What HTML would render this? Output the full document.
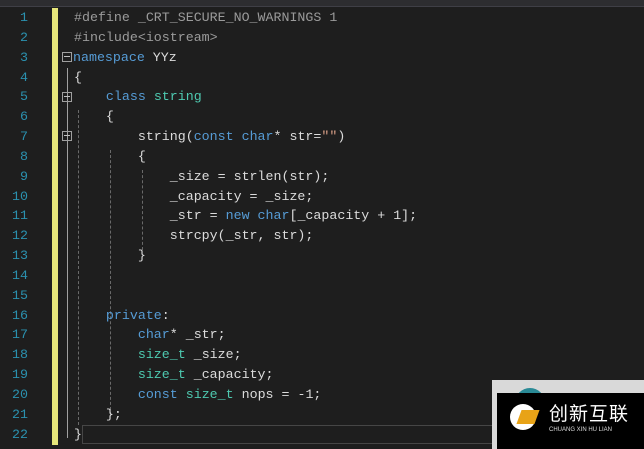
<!DOCTYPE html>
<html><head><meta charset="utf-8"><style>
body{margin:0;width:644px;height:449px;background:#1e1e1e;overflow:hidden;position:relative;font-family:"Liberation Mono","Noto Sans CJK SC",monospace;font-size:13.3px;}
.top{position:absolute;left:0;top:0;width:644px;height:6px;background:#2d2d30;border-bottom:1px solid #3f3f46}
.ln{position:absolute;left:0;width:28px;text-align:right;color:#2b91af;height:20px;line-height:20px}
.c{position:absolute;left:74px;height:20px;line-height:20px;color:#dcdcdc;white-space:pre}
.bar{position:absolute;left:52px;top:8px;width:6px;height:437px;background:#e6e67a}
.k{color:#569cd6}.t{color:#4ec9b0}.p{color:#9b9b9b}.s{color:#d69d85}
.box{position:absolute;width:8px;height:8px;border:1px solid #a0a0a0;left:62px}
.box:after{content:"";position:absolute;left:1px;top:3px;width:6px;height:1px;background:#c0c0c0}
.vl{position:absolute;width:1px;background:#a0a0a0}
.dl{position:absolute;width:0;border-left:1px dashed #6a6a6a}
.cur{position:absolute;left:82px;top:425px;width:570px;height:17px;border:1px solid #464646}
</style></head><body>
<div class="top"></div>
<div class="bar"></div>
<div class="cur"></div>
<div class="vl" style="left:67px;top:68px;height:370px"></div>
<div class="dl" style="left:78px;top:110px;height:315px"></div>
<div class="dl" style="left:110px;top:150px;height:265px"></div>
<div class="dl" style="left:142px;top:170px;height:80px"></div>
<div class="box" style="top:52px"></div>
<div class="box" style="top:92px"></div>
<div class="box" style="top:131px"></div>

<div class="ln" style="top:8px">1</div><div class="c" style="top:8px"><span class="p">#define _CRT_SECURE_NO_WARNINGS 1</span></div>
<div class="ln" style="top:28px">2</div><div class="c" style="top:28px"><span class="p">#include&lt;iostream&gt;</span></div>
<div class="ln" style="top:48px">3</div><div class="c" style="top:48px;left:73px"><span class="k">namespace</span> YYz</div>
<div class="ln" style="top:68px">4</div><div class="c" style="top:68px">{</div>
<div class="ln" style="top:87px">5</div><div class="c" style="top:87px">    <span class="k">class</span> <span class="t">string</span></div>
<div class="ln" style="top:107px">6</div><div class="c" style="top:107px">    {</div>
<div class="ln" style="top:127px">7</div><div class="c" style="top:127px">        string(<span class="k">const</span> <span class="k">char</span>* str=<span class="s">""</span>)</div>
<div class="ln" style="top:147px">8</div><div class="c" style="top:147px">        {</div>
<div class="ln" style="top:167px">9</div><div class="c" style="top:167px">            _size = strlen(str);</div>
<div class="ln" style="top:187px">10</div><div class="c" style="top:187px">            _capacity = _size;</div>
<div class="ln" style="top:206px">11</div><div class="c" style="top:206px">            _str = <span class="k">new</span> <span class="k">char</span>[_capacity + 1];</div>
<div class="ln" style="top:226px">12</div><div class="c" style="top:226px">            strcpy(_str, str);</div>
<div class="ln" style="top:246px">13</div><div class="c" style="top:246px">        }</div>
<div class="ln" style="top:266px">14</div>
<div class="ln" style="top:286px">15</div>
<div class="ln" style="top:306px">16</div><div class="c" style="top:306px">    <span class="k">private</span>:</div>
<div class="ln" style="top:325px">17</div><div class="c" style="top:325px">        <span class="k">char</span>* _str;</div>
<div class="ln" style="top:345px">18</div><div class="c" style="top:345px">        <span class="t">size_t</span> _size;</div>
<div class="ln" style="top:365px">19</div><div class="c" style="top:365px">        <span class="t">size_t</span> _capacity;</div>
<div class="ln" style="top:385px">20</div><div class="c" style="top:385px">        <span class="k">const</span> <span class="t">size_t</span> nops = -1;</div>
<div class="ln" style="top:405px">21</div><div class="c" style="top:405px">    };</div>
<div class="ln" style="top:425px">22</div><div class="c" style="top:425px">}</div>

<div style="position:absolute;left:492px;top:380px;width:152px;height:69px;background:#d9d9d9"></div>
<div style="position:absolute;left:515px;top:388px;width:30px;height:30px;border-radius:50%;background:#2a8a96"></div>
<div style="position:absolute;left:497px;top:393px;width:147px;height:56px;background:#000"></div>
<div style="position:absolute;left:510px;top:404px;width:26px;height:26px;border-radius:50%;background:#fff"></div>
<div style="position:absolute;left:519px;top:410px;width:18px;height:14px;background:#e8a317;transform:skewX(-20deg)"></div>
<div style="position:absolute;left:549px;top:402px;color:#fff;font-family:'Noto Sans CJK SC',sans-serif;font-size:19px;line-height:22px;letter-spacing:1px">创新互联</div>
<div style="position:absolute;left:549px;top:427px;color:#ddd;font-family:'Liberation Sans',sans-serif;font-size:6px;line-height:7px">CHUANG XIN HU LIAN</div>
</body></html>
